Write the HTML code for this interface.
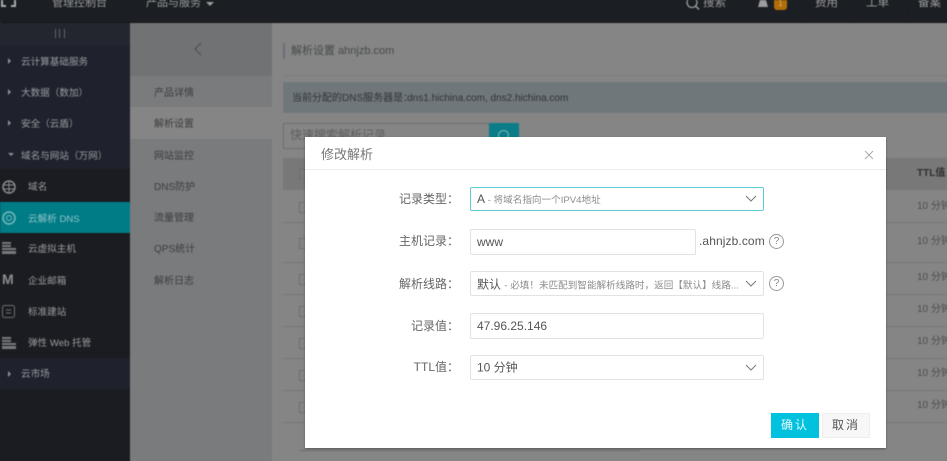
<!DOCTYPE html>
<html><head><meta charset="utf-8"><style>
html,body{margin:0;padding:0;width:947px;height:461px;overflow:hidden;background:#858585}
body{font-family:"Liberation Sans","Noto Sans CJK SC",sans-serif;position:relative}
.a{position:absolute;white-space:nowrap}
.bg{position:absolute;left:0;top:0;width:947px;height:461px;filter:blur(.5px)}
.s{color:#9a9c9f;font-size:9.6px;line-height:14px}
.p{color:#3c3d3f;font-size:10px;line-height:14px;left:154px}
.ttl{color:#4d4e50;font-size:10px;line-height:14px;left:917px}
.line{position:absolute;height:1px;background:#767676}
.cb{position:absolute;left:299px;width:9px;height:9px;border:1px solid #6e6e6e}
.tri{position:absolute;width:0;height:0;border-left:3px solid #8e9094;border-top:3px solid transparent;border-bottom:3px solid transparent;left:8px}
.top{color:#9b9da0;font-size:11.5px;line-height:16px;top:-5px}
.lab{position:absolute;right:488px;font-size:12px;line-height:16px;color:#666;text-align:right;white-space:nowrap}
.f{position:absolute;left:470px;width:292px;border:1px solid #e2e2e2;border-radius:2px;background:#fff;color:#555;box-sizing:content-box}
.f span.v{position:absolute;left:6px;top:50%;transform:translateY(-50%);font-size:12px;white-space:nowrap}
.f small{font-size:9.6px;color:#8c8c8c}
.ch{position:absolute;right:6px;top:50%;margin-top:-4px}
.q{position:absolute;left:769px;width:13px;height:13px;border:1px solid #999;border-radius:50%;color:#888;font-size:10px;line-height:13px;text-align:center}
</style></head><body>
<div class="bg">
<div class="a" style="left:0;top:0;width:947px;height:461px;background:#858585"></div>
<div class="a" style="left:-4px;top:-4px;width:955px;height:26px;background:#1b1e22"></div>
<div class="a" style="left:0;top:22px;width:951px;height:1px;background:#15171a"></div>
<svg class="a" style="left:0;top:0" width="20" height="10"><path d="M2 0V6H6M15 0V6H11" stroke="#a9abae" stroke-width="2" fill="none"/></svg>
<div class="a top" style="left:52px;font-size:11px">管理控制台</div>
<div class="a top" style="left:146px;font-size:11px">产品与服务</div>
<div class="a" style="left:206px;top:2px;width:0;height:0;border-top:4px solid #9b9da0;border-left:4px solid transparent;border-right:4px solid transparent"></div>
<svg class="a" style="left:686px;top:0" width="16" height="11"><circle cx="6" cy="2.5" r="5" stroke="#9b9da0" stroke-width="1.3" fill="none"/><path d="M9.5 6L13 9.5" stroke="#9b9da0" stroke-width="1.5"/></svg>
<div class="a top" style="left:703px">搜索</div>
<svg class="a" style="left:757px;top:0" width="12" height="9"><path d="M3 0H9L11 7H1Z" fill="#9b9da0"/></svg>
<div class="a" style="left:774px;top:0;width:13px;height:10px;background:#b06d0a;border-radius:0 0 3px 3px;color:#d9b477;font-size:8px;line-height:8px;text-align:center">1</div>
<div class="a top" style="left:815px">费用</div>
<div class="a top" style="left:866px">工单</div>
<div class="a top" style="left:918px">备案</div>
<div class="a" style="left:802px;top:0;width:1px;height:22px;background:#1f2226"></div>
<div class="a" style="left:853px;top:0;width:1px;height:22px;background:#1f2226"></div>
<div class="a" style="left:904px;top:0;width:1px;height:22px;background:#1f2226"></div>

<div class="a" style="left:-4px;top:23px;width:134px;height:442px;background:#1a1c21"></div>
<div class="a" style="left:-4px;top:23px;width:134px;height:22px;background:#23262f"></div>
<div class="a" style="left:-4px;top:45px;width:134px;height:124px;background:#1f222c"></div>
<div class="a" style="left:-4px;top:358px;width:134px;height:31px;background:#1f222c"></div>
<div class="a" style="left:55px;top:29px;width:8px;height:9px;border-left:1px solid #666;border-right:1px solid #666"></div>
<div class="a" style="left:59px;top:29px;width:1px;height:9px;background:#666"></div>
<div class="tri" style="top:58px"></div><div class="a s" style="left:21px;top:56px">云计算基础服务</div>
<div class="tri" style="top:89px"></div><div class="a s" style="left:21px;top:87px">大数据（数加）</div>
<div class="tri" style="top:120px"></div><div class="a s" style="left:21px;top:118px">安全（云盾）</div>
<div class="a" style="left:8px;top:153px;width:0;height:0;border-top:3px solid #8e9094;border-left:3px solid transparent;border-right:3px solid transparent"></div><div class="a s" style="left:21px;top:150px">域名与网站（万网）</div>
<svg class="a" style="left:2px;top:180px" width="14" height="14"><circle cx="7" cy="7" r="6" fill="none" stroke="#8a8c8f" stroke-width="1.5"/><path d="M1 5H13M1 9H13M7 1V13" stroke="#8a8c8f"/></svg>
<div class="a s" style="left:28px;top:181px">域名</div>
<div class="a" style="left:0;top:202px;width:130px;height:31px;background:#007c86"></div>
<svg class="a" style="left:2px;top:211px" width="14" height="14"><circle cx="7" cy="7" r="6" fill="none" stroke="#7cb8bd" stroke-width="1.5"/><circle cx="7" cy="7" r="2.5" fill="none" stroke="#7cb8bd"/></svg>
<div class="a s" style="left:28px;top:213px;color:#8fc4c8">云解析 DNS</div>
<svg class="a" style="left:2px;top:242px" width="14" height="13"><path d="M0 0H9V2H0ZM0 3H9V5H0ZM0 6H14V8H0ZM0 9H14V12H0Z" fill="#777a7d"/></svg>
<div class="a s" style="left:28px;top:243px">云虚拟主机</div>
<div class="a" style="left:2px;top:272px;color:#8a8c8f;font-size:14px;line-height:15px;font-weight:bold">M</div>
<div class="a s" style="left:28px;top:275px">企业邮箱</div>
<svg class="a" style="left:2px;top:305px" width="13" height="13"><rect x=".5" y=".5" width="12" height="12" rx="2" fill="none" stroke="#6a6c70"/><path d="M4 5H9M4 8H9" stroke="#6a6c70"/></svg>
<div class="a s" style="left:28px;top:306px">标准建站</div>
<svg class="a" style="left:2px;top:337px" width="14" height="13"><path d="M0 0H9V2H0ZM0 3H9V5H0ZM0 6H14V8H0ZM0 9H14V12H0Z" fill="#777a7d"/></svg>
<div class="a s" style="left:28px;top:337px">弹性 Web 托管</div>
<div class="tri" style="top:371px"></div><div class="a s" style="left:21px;top:368px">云市场</div>

<div class="a" style="left:130px;top:23px;width:142px;height:442px;background:#7a7b7d"></div>
<div class="a" style="left:130px;top:23px;width:142px;height:53px;background:#707274"></div>
<div class="a" style="left:130px;top:107px;width:142px;height:32px;background:#858585"></div>
<svg class="a" style="left:193px;top:42px" width="10" height="14"><path d="M8 1L2 7L8 13" stroke="#4b4c4e" fill="none"/></svg>
<div class="a p" style="top:87px">产品详情</div>
<div class="a p" style="top:118px">解析设置</div>
<div class="a p" style="top:150px">网站监控</div>
<div class="a p" style="top:181px">DNS防护</div>
<div class="a p" style="top:212px">流量管理</div>
<div class="a p" style="top:243px">QPS统计</div>
<div class="a p" style="top:275px">解析日志</div>

<div class="a" style="left:283px;top:43px;width:2px;height:16px;background:#6a7077"></div>
<div class="a" style="left:291px;top:43px;color:#46494b;font-size:11px;line-height:16px">解析设置 ahnjzb.com</div>
<div class="line" style="left:283px;top:75px;width:664px;background:#7c7c7c"></div>
<div class="a" style="left:283px;top:82px;width:668px;height:31px;background:#6f777b"></div>
<div class="a" style="left:292px;top:92px;color:#2f3335;font-size:10px;line-height:14px">当前分配的DNS服务器是<span style="margin-right:-6px">：</span>dns1.hichina.com, dns2.hichina.com</div>
<div class="a" style="left:283px;top:123px;width:205px;height:24px;border:1px solid #6e6e6e;border-right:0;box-sizing:content-box"></div>
<div class="a" style="left:290px;top:127px;color:#5f5f5f;font-size:12px;line-height:16px">快速搜索解析记录</div>
<div class="a" style="left:489px;top:123px;width:30px;height:24px;background:#0a7d88"></div>
<div class="a" style="left:498px;top:130px;width:9px;height:9px;border:1.5px solid #7fb6bb;border-radius:50%"></div>
<div class="a" style="left:283px;top:158px;width:668px;height:32px;background:#787878"></div>
<div class="a" style="left:917px;top:167px;color:#2f2f30;font-size:10px;line-height:14px;font-weight:bold">TTL值</div>
<div class="line" style="left:283px;top:222px;width:668px"></div>
<div class="line" style="left:283px;top:262px;width:668px"></div>
<div class="line" style="left:283px;top:294px;width:668px"></div>
<div class="line" style="left:283px;top:326px;width:668px"></div>
<div class="line" style="left:283px;top:358px;width:668px"></div>
<div class="line" style="left:283px;top:390px;width:668px"></div>
<div class="line" style="left:283px;top:422px;width:668px"></div>
<div class="line" style="left:300px;top:450px;width:340px;background:#6e6e6e"></div>
<div class="cb" style="top:168px"></div><div class="cb" style="top:202px"></div><div class="cb" style="top:238px"></div><div class="cb" style="top:274px"></div><div class="cb" style="top:306px"></div><div class="cb" style="top:338px"></div><div class="cb" style="top:370px"></div><div class="cb" style="top:402px"></div>
<div class="a ttl" style="top:200px">10 分钟</div>
<div class="a ttl" style="top:235px">10 分钟</div>
<div class="a ttl" style="top:271px">10 分钟</div>
<div class="a ttl" style="top:303px">10 分钟</div>
<div class="a ttl" style="top:335px">10 分钟</div>
<div class="a ttl" style="top:367px">10 分钟</div>
<div class="a ttl" style="top:399px">10 分钟</div>
</div>

<div class="a" style="left:305px;top:137px;width:581px;height:311px;background:#fff;box-shadow:0 1px 2px rgba(0,0,0,.35)"></div>
<div class="a" style="left:305px;top:169px;width:581px;height:1px;background:#ececec"></div>
<div class="a" style="left:321px;top:146px;font-size:13px;line-height:18px;color:#777">修改解析</div>
<svg class="a" style="left:864px;top:150px" width="10" height="10"><path d="M1 1L9 9M9 1L1 9" stroke="#aaa" fill="none"/></svg>

<div class="lab" style="top:191px">记录类型：</div>
<div class="f" style="top:187px;height:22px;border-color:#5ccbd6"><span class="v">A <small>- 将域名指向一个IPV4地址</small></span><svg class="ch" width="12" height="8"><path d="M1 1L6 6L11 1" stroke="#777" fill="none"/></svg></div>
<div class="lab" style="top:233px">主机记录：</div>
<div class="f" style="top:229px;width:224px;height:24px"><span class="v" style="font-size:12px">www</span></div>
<div class="a" style="left:699px;top:233px;font-size:12px;line-height:16px;color:#555;letter-spacing:.1px">.ahnjzb.com</div>
<div class="q" style="top:234px">?</div>
<div class="lab" style="top:276px">解析线路：</div>
<div class="f" style="top:271px;height:23px"><span class="v">默认 <small>- 必填！未匹配到智能解析线路时，返回【默认】线路...</small></span><svg class="ch" width="12" height="8"><path d="M1 1L6 6L11 1" stroke="#777" fill="none"/></svg></div>
<div class="q" style="top:276px">?</div>
<div class="lab" style="top:318px">记录值：</div>
<div class="f" style="top:313px;height:24px"><span class="v">47.96.25.146</span></div>
<div class="lab" style="top:359px">TTL值：</div>
<div class="f" style="top:355px;height:23px"><span class="v" style="margin-top:-1px">10 分钟</span><svg class="ch" width="12" height="8"><path d="M1 1L6 6L11 1" stroke="#777" fill="none"/></svg></div>
<div class="a" style="left:771px;top:413px;width:48px;height:25px;background:#00c1de;color:#e8fafd;font-size:12px;line-height:25px;text-align:center;letter-spacing:2px">确认</div>
<div class="a" style="left:822px;top:413px;width:46px;height:23px;background:#f7f7f7;border:1px solid #eee;color:#555;font-size:12px;line-height:23px;text-align:center;letter-spacing:2px">取消</div>
</body></html>
